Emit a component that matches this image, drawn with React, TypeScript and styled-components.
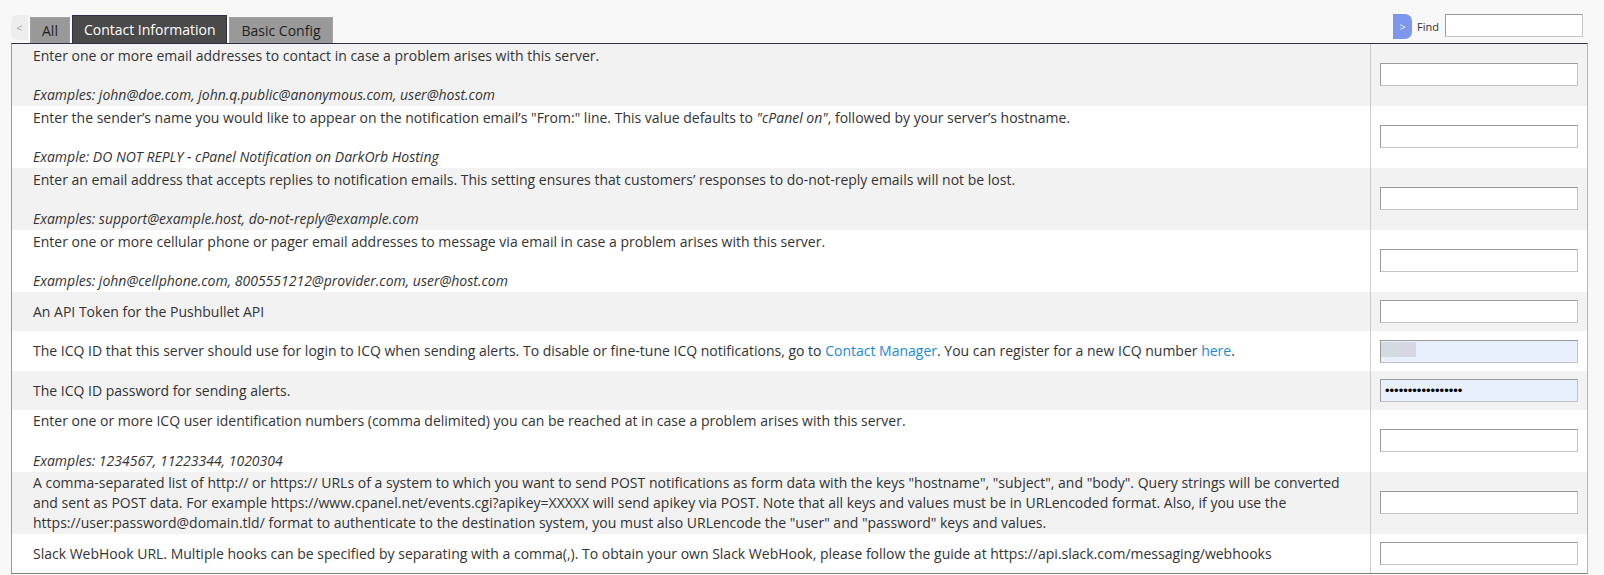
import * as React from 'react';
import styled, { createGlobalStyle } from 'styled-components';

const GlobalStyle = createGlobalStyle`
  html, body {
    margin: 0;
    padding: 0;
    background: #f8f8f8;
  }
  body {
    font-family: "Open Sans", "Liberation Sans", sans-serif;
    color: #333;
  }
`;

const Page = styled.div`
  padding: 0 16px 0 11px;
  height: 575px;
  box-sizing: border-box;
`;

const Header = styled.div`
  height: 43px;
  display: flex;
  justify-content: space-between;
`;

const TabStrip = styled.div`
  display: flex;
  align-items: flex-end;
  gap: 2px;
`;

const ScrollButton = styled.div<{ $side: 'left' | 'right' }>`
  width: ${(p) => (p.$side === 'left' ? 17 : 19)}px;
  height: 25px;
  margin-bottom: ${(p) => (p.$side === 'left' ? 3 : 0)}px;
  display: flex;
  align-items: center;
  justify-content: center;
  font-size: 11px;
  color: ${(p) => (p.$side === 'left' ? '#a3a3a3' : '#eef2ff')};
  background: ${(p) => (p.$side === 'left' ? '#eeeeee' : '#7b97ee')};
  border-radius: ${(p) => (p.$side === 'left' ? '6px 0 0 6px' : '0 7px 7px 0')};
`;

const Tab = styled.div<{ $active?: boolean }>`
  box-sizing: border-box;
  height: ${(p) => (p.$active ? 28 : 26)}px;
  padding: 0 11px;
  display: flex;
  align-items: center;
  font-size: 14px;
  color: ${(p) => (p.$active ? '#ffffff' : '#1f1f1f')};
  background: ${(p) => (p.$active ? '#4a4a4a' : '#999999')};
  border: 1px solid ${(p) => (p.$active ? '#2e3144' : '#a2a2a2')};
  border-bottom: none;
`;

const FindBox = styled.div`
  display: flex;
  align-items: flex-start;
  padding-top: 14px;
  margin-right: 5px;
`;

const FindLabel = styled.label`
  font-size: 11px;
  color: #333;
  margin: 5px 6px 0 5px;
`;

const FindInput = styled.input`
  box-sizing: border-box;
  width: 138px;
  height: 23px;
  margin: 0;
  border: 1px solid;
  border-color: #9a9a9a #c4c4c4 #c4c4c4 #9a9a9a;
  background: #fff;
  outline: none;
`;

const Table = styled.div`
  border-top: 1px solid #2b2e45;
  border-left: 1px solid #9a9a9a;
  border-right: 1px solid #b5b5b5;
  border-bottom: 1px solid #808080;
`;

const Row = styled.div`
  display: grid;
  grid-template-columns: 1fr 217px;
  background: #ffffff;
  &:nth-child(odd) {
    background: #f2f2f2;
  }
`;

const Description = styled.div`
  padding: 1.6px 8px 1.6px 21px;
  font-size: 14px;
  line-height: 19.6px;
  align-self: center;
  a {
    color: #1b8ad4;
    text-decoration: none;
  }
  em {
    font-style: italic;
  }
`;

const FieldCell = styled.div`
  border-left: 1px solid #cccccc;
  padding: 8px 9px;
  display: flex;
  align-items: center;
`;

const FieldWrap = styled.div`
  position: relative;
  width: 198px;
`;

const TextField = styled.input<{ $filled?: boolean }>`
  box-sizing: border-box;
  width: 198px;
  height: 23px;
  margin: 0;
  padding: 0 4px;
  font-family: "Liberation Sans", sans-serif;
  font-size: 13px;
  color: #000;
  border: 1px solid;
  border-color: #9a9a9a #c4c4c4 #c4c4c4 #9a9a9a;
  background: ${(p) => (p.$filled ? '#e8f0fe' : '#ffffff')};
  outline: none;
`;

const Redacted = styled.span`
  position: absolute;
  left: 1px;
  top: 3px;
  width: 35px;
  height: 15px;
  background: linear-gradient(90deg, #d2dbe0 0%, #d3dbe0 50%, #d6d7e2 51%, #d6d7e2 100%);
`;

type Field = 'text' | 'icq' | 'password';

type Setting = {
  desc: React.ReactNode;
  example?: string;
  field?: Field;
};

const settings: Setting[] = [
  {
    desc: 'Enter one or more email addresses to contact in case a problem arises with this server.',
    example: 'Examples: john@doe.com, john.q.public@anonymous.com, user@host.com',
  },
  {
    desc: (
      <>
        Enter the sender’s name you would like to appear on the notification email’s "From:" line. This value
        defaults to <em>"cPanel on"</em>, followed by your server’s hostname.
      </>
    ),
    example: 'Example: DO NOT REPLY - cPanel Notification on DarkOrb Hosting',
  },
  {
    desc: 'Enter an email address that accepts replies to notification emails. This setting ensures that customers’ responses to do-not-reply emails will not be lost.',
    example: 'Examples: support@example.host, do-not-reply@example.com',
  },
  {
    desc: 'Enter one or more cellular phone or pager email addresses to message via email in case a problem arises with this server.',
    example: 'Examples: john@cellphone.com, 8005551212@provider.com, user@host.com',
  },
  { desc: 'An API Token for the Pushbullet API' },
  {
    desc: (
      <>
        The ICQ ID that this server should use for login to ICQ when sending alerts. To disable or fine-tune ICQ
        notifications, go to <a href="#contact">Contact Manager</a>. You can register for a new ICQ number{' '}
        <a href="#icq">here</a>.
      </>
    ),
    field: 'icq',
  },
  { desc: 'The ICQ ID password for sending alerts.', field: 'password' },
  {
    desc: 'Enter one or more ICQ user identification numbers (comma delimited) you can be reached at in case a problem arises with this server.',
    example: 'Examples: 1234567, 11223344, 1020304',
  },
  {
    desc: (
      <>
        A comma-separated list of http:// or https:// URLs of a system to which you want to send POST notifications as
        form data with the keys "hostname", "subject", and "body". Query strings will be converted
        <br />
        and sent as POST data. For example https://www.cpanel.net/events.cgi?apikey=XXXXX will send apikey via POST.
        Note that all keys and values must be in URLencoded format. Also, if you use the
        <br />
        https://user:password@domain.tld/ format to authenticate to the destination system, you must also URLencode
        the "user" and "password" keys and values.
      </>
    ),
  },
  {
    desc: 'Slack WebHook URL. Multiple hooks can be specified by separating with a comma(,). To obtain your own Slack WebHook, please follow the guide at https://api.slack.com/messaging/webhooks',
  },
];

const SettingField = ({ field = 'text' }: { field?: Field }) => {
  if (field === 'password') {
    return <TextField $filled type="password" defaultValue="12345678901234567" />;
  }
  if (field === 'icq') {
    return (
      <FieldWrap>
        <TextField $filled type="text" defaultValue="" />
        <Redacted />
      </FieldWrap>
    );
  }
  return <TextField type="text" defaultValue="" />;
};

const App = () => {
  return (
    <Page>
      <GlobalStyle />
      <Header>
        <TabStrip>
          <ScrollButton $side="left">&lt;</ScrollButton>
          <Tab>All</Tab>
          <Tab $active>Contact Information</Tab>
          <Tab>Basic Config</Tab>
        </TabStrip>
        <FindBox>
          <ScrollButton $side="right">&gt;</ScrollButton>
          <FindLabel htmlFor="find">Find</FindLabel>
          <FindInput id="find" type="text" />
        </FindBox>
      </Header>
      <Table>
        {settings.map((s, i) => (
          <Row key={i}>
            <Description>
              {s.desc}
              {s.example && (
                <>
                  <br />
                  <br />
                  <em>{s.example}</em>
                </>
              )}
            </Description>
            <FieldCell>
              <SettingField field={s.field} />
            </FieldCell>
          </Row>
        ))}
      </Table>
    </Page>
  );
};

export default App;
